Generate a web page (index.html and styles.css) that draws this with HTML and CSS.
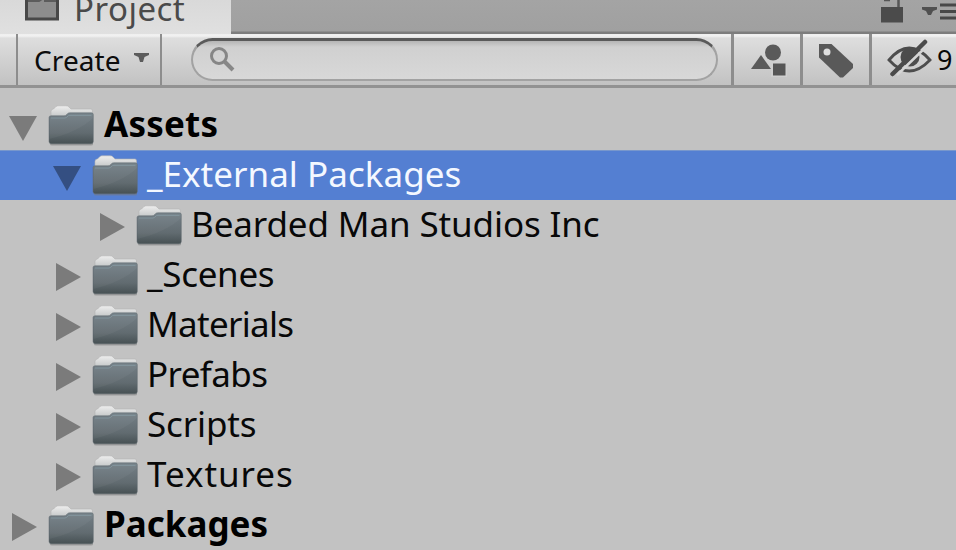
FILE: index.html
```html
<!DOCTYPE html>
<html lang="en">
<head>
<meta charset="utf-8">
<title>Project</title>
<link rel="stylesheet" href="styles.css">
</head>
<body>
<svg class="defs" width="0" height="0" aria-hidden="true">
  <defs>
    <linearGradient id="front" x1="0" y1="0" x2="0" y2="1"><stop offset="0" stop-color="#76838a"/><stop offset=".12" stop-color="#717c83"/><stop offset=".65" stop-color="#616b70"/><stop offset="1" stop-color="#465053"/></linearGradient>
    <linearGradient id="back" x1="0" y1="0" x2="0" y2="1"><stop offset="0" stop-color="#eeeeee"/><stop offset="1" stop-color="#b9bcbd"/></linearGradient>
    <symbol id="folder" viewBox="0 0 47 42">
      <path d="M2 38h43v1.500q0 1-2 1H4q-2 0-2-1z" fill="#777" opacity=".5"/>
      <path d="M3 15V6.500Q3 4 5.500 4L8 1.500Q9 .8 10 .8H18Q20 .8 21 2L23 4H43Q44.500 4 44.500 6V15z" fill="url(#back)" stroke="#b2b2b2" stroke-width=".6"/>
      <path d="M1 12.500Q1 10.800 3 10.800H16Q18 10.800 19 9.200L20 8.200Q20.500 7.800 22 7.800H43.500Q45.300 7.800 45.300 9.500V36.500Q45.300 38.800 43 38.800H3.500Q1 38.800 1 36.500z" fill="url(#front)" stroke="#606b71" stroke-width=".5"/>
      <path d="M1.500 38V34Q30 27 45 13V9H22L18 13H2z" fill="#fff" opacity=".04"/>
      <path d="M3 13H17Q19 12.700 20.500 10.400H43.500" fill="none" stroke="#8799a2" stroke-width=".8"/>
    </symbol>
    <symbol id="right" viewBox="0 0 25 28"><path d="M0 0L25 14L0 28z" fill="currentColor"/></symbol>
    <symbol id="down" viewBox="0 0 28 25"><path d="M0 0H28L14 25z" fill="currentColor"/></symbol>
  </defs>
</svg>
<main class="panel">
  <header class="tabs">
    <div class="tab">
      <svg class="tab-icon" width="36" height="22" viewBox="0 0 36 22"><path d="M2.500 -3V19H33.500V-3" fill="#8d8d8d" stroke="#484848" stroke-width="3"/><path d="M4 1H15L18-1M20 1H32" fill="none" stroke="#5c5c5c" stroke-width="2"/></svg>
      <span class="tab-label">Project</span>
    </div>
    <div class="window-tools">
      <svg width="76" height="32" viewBox="880 0 76 32"><path d="M898.500 9V0M884 0H890" stroke="#565656" stroke-width="2.500" fill="none"/><path d="M881 7H903V22.500H881z" fill="#4b4b4b"/><path d="M922 7H937V9.500L933 11L931 15H928L926 11L922 9.500z" fill="#505050"/><path d="M940 5H956M940 11.500H956M940 18H956" stroke="#484848" stroke-width="2.800"/></svg>
    </div>
  </header>
  <div class="toolbar">
    <div class="gutter"></div>
    <button class="create"><span>Create</span><svg width="15" height="10" viewBox="0 0 15 10"><path d="M0 0H15V2L10.500 4L9 9H6L4.500 4L0 2z" fill="#5c5c5c"/></svg></button>
    <div class="search-area"><div class="search"><svg width="28" height="28" viewBox="0 0 28 28"><circle cx="9" cy="9" r="7.500" fill="none" stroke="#868686" stroke-width="3"/><path d="M14.500 14.500L23 23" stroke="#888" stroke-width="4"/></svg></div></div>
    <div class="tool type"><svg width="36" height="34" viewBox="0 0 36 34"><path d="M10 11L20 25H0z" fill="#5a5a5a"/><circle cx="22" cy="8.500" r="8" fill="#5a5a5a"/><path d="M20 17.500H36V33H20z" fill="#cfcfcf"/><path d="M22 19.500H34.500V31.500H22z" fill="#565656"/></svg></div>
    <div class="tool tag"><svg width="36" height="34" viewBox="0 0 36 34"><path d="M0 0H12.500L34 20V24L24 33.500H21L0 13.500z" fill="#595959"/><circle cx="8" cy="8" r="3.500" fill="#dedede"/></svg></div>
    <div class="tool hidden"><svg width="46" height="40" viewBox="0 0 46 40"><path d="M2 21Q22-3 43 21Q22 43 2 21z" fill="none" stroke="#4d4d4d" stroke-width="2.800"/><circle cx="23" cy="18" r="9.500" fill="#4c4c4c"/><path d="M10 36L40 7" stroke="#d5d5d5" stroke-width="2.500"/><path d="M5.500 35L38 3" stroke="#4b4b4b" stroke-width="4.500" stroke-linecap="round"/></svg><span>9</span></div>
  </div>
  <div class="tree">
    <div class="row level-0 bold"><span class="arrow"><svg class="open"><use href="#down"/></svg></span><svg class="folder"><use href="#folder"/></svg><span class="label assets">Assets</span></div>
    <div class="row level-1 selected"><span class="arrow"><svg class="open"><use href="#down"/></svg></span><svg class="folder"><use href="#folder"/></svg><span class="label external">_External Packages</span></div>
    <div class="row level-2"><span class="arrow"><svg class="closed"><use href="#right"/></svg></span><svg class="folder"><use href="#folder"/></svg><span class="label studios">Bearded Man Studios Inc</span></div>
    <div class="row level-1"><span class="arrow"><svg class="closed"><use href="#right"/></svg></span><svg class="folder"><use href="#folder"/></svg><span class="label scenes">_Scenes</span></div>
    <div class="row level-1"><span class="arrow"><svg class="closed"><use href="#right"/></svg></span><svg class="folder"><use href="#folder"/></svg><span class="label materials">Materials</span></div>
    <div class="row level-1"><span class="arrow"><svg class="closed"><use href="#right"/></svg></span><svg class="folder"><use href="#folder"/></svg><span class="label prefabs">Prefabs</span></div>
    <div class="row level-1"><span class="arrow"><svg class="closed"><use href="#right"/></svg></span><svg class="folder"><use href="#folder"/></svg><span class="label scripts">Scripts</span></div>
    <div class="row level-1"><span class="arrow"><svg class="closed"><use href="#right"/></svg></span><svg class="folder"><use href="#folder"/></svg><span class="label textures">Textures</span></div>
    <div class="row level-0 bold"><span class="arrow"><svg class="closed"><use href="#right"/></svg></span><svg class="folder"><use href="#folder"/></svg><span class="label packages">Packages</span></div>
  </div>
</main>
</body>
</html>
```
FILE: styles.css
```css
* { box-sizing: border-box; }
body { margin: 0; background: #c2c2c2; color: #080808; font-family: "Noto Sans", "Open Sans", sans-serif; overflow: hidden; }
svg { display: block; flex: none; }
.defs { height: 0; }
.panel { width: 956px; height: 550px; overflow: hidden; }
.tabs { display: flex; justify-content: space-between; height: 34px; background: linear-gradient(#a4a4a4, #a0a0a0 31px, #7d7d7d 32px, #7d7d7d); }
.tab { display: flex; width: 231px; padding-left: 24px; background: linear-gradient(#d9d9d9, #e0e0e0); }
.tab-icon { margin-right: 14px; }
.tab-label { height: 34px; margin-top: -14px; font-size: 33px; line-height: 45px; letter-spacing: .5px; color: #4a4a4a; white-space: nowrap; }
.toolbar { display: flex; height: 53.5px; border-bottom: 3px solid #929292; background: linear-gradient(#efefef 0, #f1f1f1 2px, #dedede 4px, #c2c2c2); }
.gutter { width: 18px; border-right: 2.500px solid #8d8d8d; }
.create { display: flex; width: 144px; padding: 0 0 0 16px; border: 0; border-right: 2.500px solid #8d8d8d; background: none; font: 28px/46px "Noto Sans", sans-serif; color: #0c0c0c; }
.create span { width: 100px; margin-top: 3px; text-align: left; letter-spacing: .1px; }
.create svg { margin-top: 19px; }
.search-area { width: 572px; padding: 4px 0 0 29px; border-right: 3px solid #8d8d8d; }
.search { width: 527px; height: 43px; padding: 9px 0 0 17px; border: 2px solid #a2a2a2; border-top: 3px solid #5a5a5a; border-radius: 22px; background: linear-gradient(#b5b5b5, #d0d0d0 6px, #d8d8d8); }
.search svg { margin: -3px 0 0 0; }
.tool { display: flex; width: 69px; border-right: 3px solid #8d8d8d; }
.type svg { margin: 10px 0 0 17px; }
.tag svg { margin: 10px 0 0 16px; }
.hidden { width: 84px; border-right: 0; }
.hidden svg { margin: 5px 0 0 15px; }
.hidden span { margin-left: 4px; margin-top: 3px; font-size: 27px; line-height: 46px; }
.tree { padding-top: 12.500px; }
.row { display: flex; height: 50px; }
.level-1 { padding-left: 44px; }
.level-2 { padding-left: 88px; }
.selected { background: #547fd2; color: #f4f8ff; border-top: 1px solid #7897cc; }
.arrow { width: 48px; flex: none; color: #7b7b7b; }
.selected .arrow { color: #344f82; }
.open { width: 28px; height: 25px; margin: 16px 0 0 9px; }
.closed { width: 25px; height: 28px; margin: 13px 0 0 12px; }
.folder { width: 47px; height: 42px; margin-top: 4.500px; }
.label { margin-left: 8px; font-size: 35px; line-height: 48px; white-space: pre; }
.selected .open, .selected .folder { transform: translateY(-1px); }
.selected .label { line-height: 46px; }
.bold .label { margin-left: 9px; font-weight: 700; color: #000; }
.assets { letter-spacing: .2px; }
.external { letter-spacing: .03px; }
.studios { letter-spacing: -.12px; }
.scenes { letter-spacing: -.3px; }
.materials { letter-spacing: -.7px; }
.prefabs { letter-spacing: -.6px; }
.scripts { letter-spacing: -.15px; }
.textures { letter-spacing: .95px; }
```
